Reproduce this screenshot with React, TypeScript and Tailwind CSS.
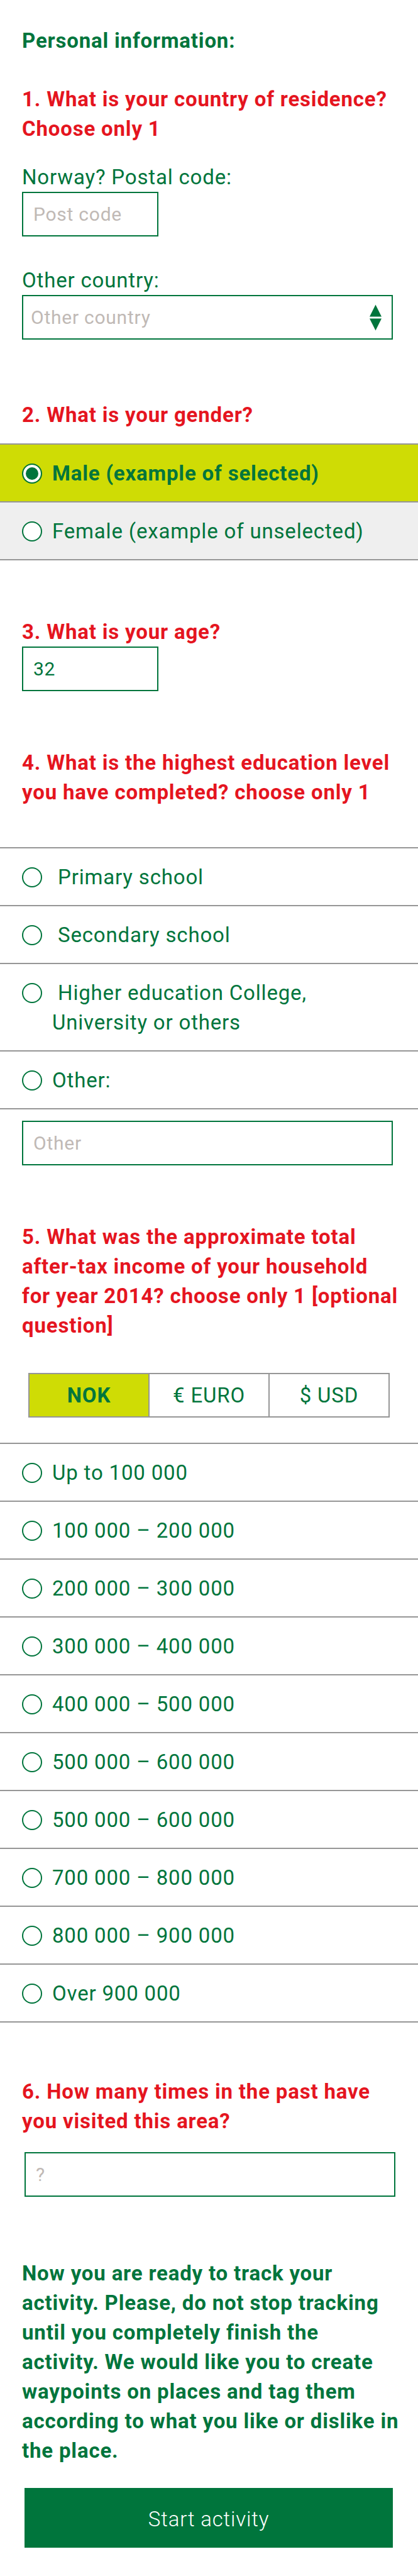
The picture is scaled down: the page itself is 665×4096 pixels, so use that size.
import { useState, type ReactNode } from "react";

const currencies = ["NOK", "€ EURO", "$ USD"];

const incomes = [
  "Up to 100 000",
  "100 000 – 200 000",
  "200 000 – 300 000",
  "300 000 – 400 000",
  "400 000 – 500 000",
  "500 000 – 600 000",
  "500 000 – 600 000",
  "700 000 – 800 000",
  "800 000 – 900 000",
  "Over 900 000",
];

const education = [
  " Primary school",
  " Secondary school",
  " Higher education College,\nUniversity or others",
  "Other:",
];

const field =
  "h-[71px] border-2 border-[#00753c] bg-white text-[30px] tracking-wide text-[#00753c] outline-none placeholder:text-[#c0b9b5]";

function Question({ children }: { children: ReactNode }) {
  return <h2 className="pr-6 pl-[35px] font-bold text-[#e5151f]">{children}</h2>;
}

type OptionsProps = {
  name: string;
  label: string;
  items: string[];
  value: number | null;
  onChange: (index: number) => void;
  shaded?: boolean;
};

function Options({ name, label, items, value, onChange, shaded }: OptionsProps) {
  return (
    <div role="radiogroup" aria-label={label} className="border-t-2 border-[#969696]">
      {items.map((item, i) => (
        <label
          key={i}
          className={`flex cursor-pointer items-start gap-4 border-b-2 border-[#969696] pt-[22px] pr-8 pb-[21px] pl-[35px] ${
            value === i ? "bg-[#cfdc05] font-bold" : shaded ? "bg-[#efefef]" : "bg-white"
          }`}
        >
          <span className="flex h-[47px] items-center">
            <input
              type="radio"
              name={name}
              checked={value === i}
              onChange={() => onChange(i)}
              className="size-8 appearance-none rounded-full border-2 border-[#00753c] bg-white bg-clip-padding p-1 before:block before:size-full before:rounded-full checked:before:bg-[#00753c]"
            />
          </span>
          <span className="whitespace-pre-wrap">{item}</span>
        </label>
      ))}
    </div>
  );
}

export default function App() {
  const [gender, setGender] = useState<number | null>(0);
  const [level, setLevel] = useState<number | null>(null);
  const [income, setIncome] = useState<number | null>(null);
  const [currency, setCurrency] = useState(0);

  return (
    <form
      onSubmit={(e) => e.preventDefault()}
      className="bg-white pt-[41px] pb-[45px] font-[Roboto,sans-serif] text-[33px] leading-[47px] tracking-wide text-[#00753c]"
    >
      <h1 className="px-[35px] font-bold">Personal information:</h1>

      <section className="mt-[46px]">
        <Question>1. What is your country of residence? Choose only 1</Question>
        <div className="mt-[30px] flex flex-col items-start px-[35px]">
          <label htmlFor="postcode">Norway? Postal code:</label>
          <input id="postcode" placeholder="Post code" className={`w-[217px] px-4 ${field}`} />
        </div>
        <div className="mt-[46px] flex flex-col pr-10 pl-[35px]">
          <label htmlFor="country">Other country:</label>
          <div className="relative">
            <select
              id="country"
              defaultValue=""
              className={`w-full appearance-none px-3 invalid:text-[#c0b9b5] ${field}`}
              required
            >
              <option value="" disabled>
                Other country
              </option>
              <option value="se">Sweden</option>
              <option value="dk">Denmark</option>
            </select>
            <svg
              viewBox="0 0 24 52"
              aria-hidden="true"
              className="pointer-events-none absolute inset-y-0 right-[18px] my-auto h-[42px] w-[19px] fill-[#00753c]"
            >
              <path d="M12 0 24 24H0Z" />
              <path d="M0 28H24L12 52Z" />
            </svg>
          </div>
        </div>
      </section>

      <section className="mt-[96px]">
        <Question>2. What is your gender?</Question>
        <div className="mt-[22px]">
          <Options
            name="gender"
            label="Gender"
            items={["Male (example of selected)", "Female (example of unselected)"]}
            value={gender}
            onChange={setGender}
            shaded
          />
        </div>
      </section>

      <section className="mt-[90px]">
        <Question>
          <label htmlFor="age">3. What is your age?</label>
        </Question>
        <div className="flex px-[35px]">
          <input id="age" defaultValue="32" className={`w-[217px] px-4 ${field}`} />
        </div>
      </section>

      <section className="mt-[90px]">
        <Question>4. What is the highest education level you have completed? choose only 1</Question>
        <div className="mt-16">
          <Options name="level" label="Education level" items={education} value={level} onChange={setLevel} />
        </div>
        <div className="mt-[18px] flex pr-10 pl-[35px]">
          <input aria-label="Other education" placeholder="Other" className={`w-full px-4 ${field}`} />
        </div>
      </section>

      <section className="mt-[90px]">
        <Question>
          5. What was the approximate total after-tax income of your household
          <br />
          for year 2014? choose only 1 [optional question]
        </Question>
        <div className="mx-[45px] mt-[52px] flex divide-x-2 divide-[#969696] border-2 border-[#969696]">
          {currencies.map((c, i) => (
            <button
              key={c}
              type="button"
              aria-pressed={currency === i}
              onClick={() => setCurrency(i)}
              className={`h-[67px] flex-1 ${currency === i ? "bg-[#cfdc05] font-bold" : "bg-white"}`}
            >
              {c}
            </button>
          ))}
        </div>
        <div className="mt-10">
          <Options name="income" label="Household income" items={incomes} value={income} onChange={setIncome} />
        </div>
      </section>

      <section className="mt-[86px]">
        <Question>
          <label htmlFor="visits">6. How many times in the past have you visited this area?</label>
        </Question>
        <div className="mt-[26px] flex pr-9 pl-[39px]">
          <input id="visits" placeholder="?" className={`w-full px-4 ${field}`} />
        </div>
      </section>

      <p className="mt-[98px] pr-6 pl-[35px] font-bold">
        Now you are ready to track your activity. Please, do not stop tracking until you completely finish the
        <br />
        activity. We would like you to create waypoints on places and tag them according to what you like or
        dislike in the place.
      </p>

      <div className="mt-9 flex pr-10 pl-[39px]">
        <button type="submit" className="h-[95px] flex-1 bg-[#00753c] pt-1 font-light text-white">
          Start activity
        </button>
      </div>
    </form>
  );
}
